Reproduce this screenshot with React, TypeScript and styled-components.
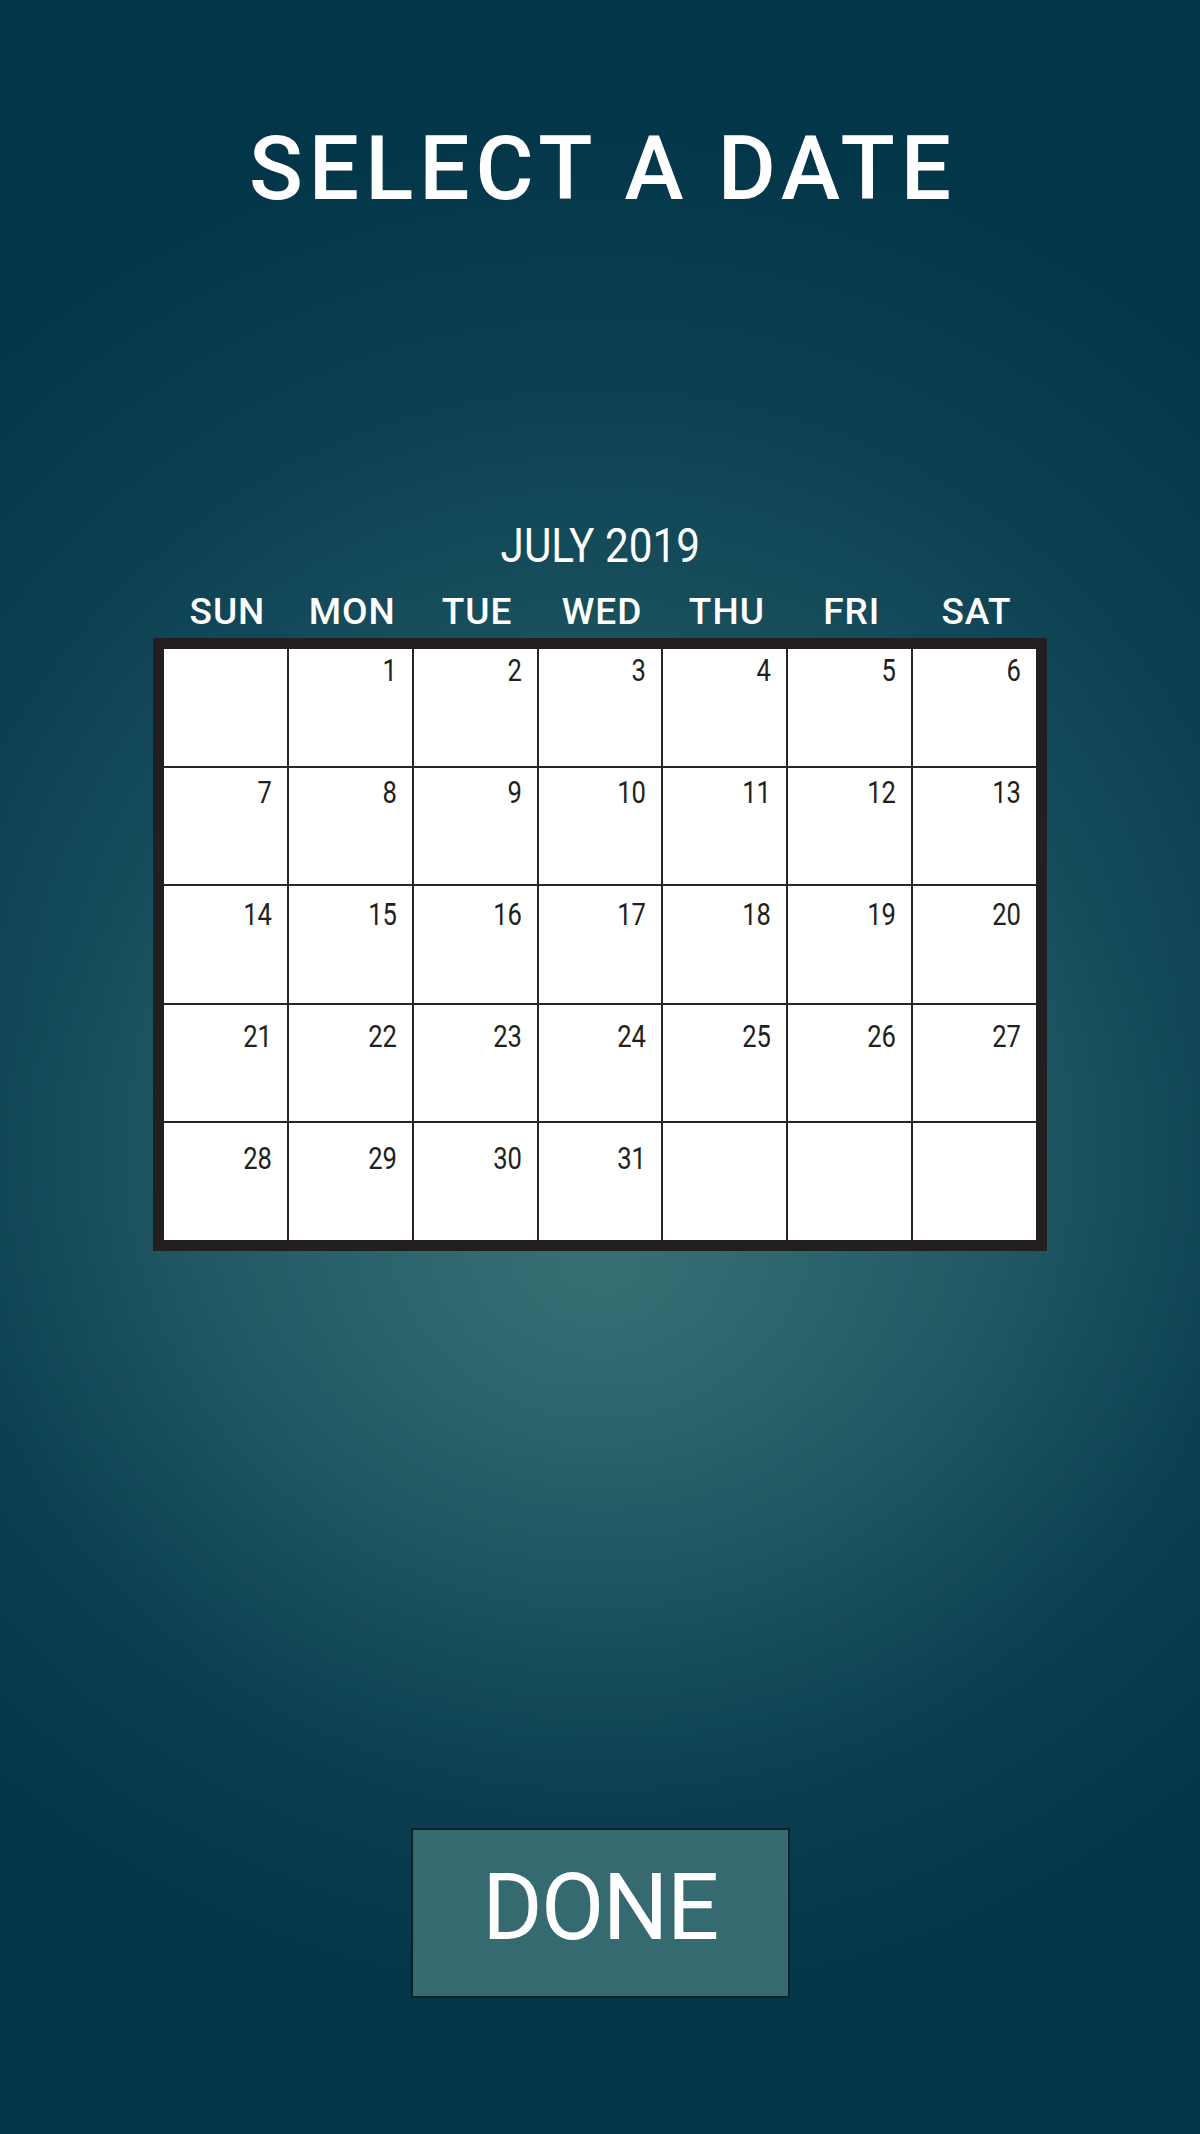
import styled, { createGlobalStyle } from "styled-components";

const GlobalStyle = createGlobalStyle`
  html, body {
    margin: 0;
    padding: 0;
  }
  body {
    font-family: Roboto, "Liberation Sans", sans-serif;
    background: #04374a;
  }
`;

const WEEKDAYS = ["SUN", "MON", "TUE", "WED", "THU", "FRI", "SAT"];

// july 2019 starts on a monday
function buildDays() {
  const cells: (number | null)[] = [null];
  for (let d = 1; d <= 31; d++) cells.push(d);
  while (cells.length < 35) cells.push(null);
  return cells;
}

function App() {
  const days = buildDays();

  return (
    <Page>
      <GlobalStyle />
      <Title>SELECT A DATE</Title>
      <CalendarSection>
        <MonthLabel>JULY 2019</MonthLabel>
        <WeekdayRow>
          {WEEKDAYS.map((w) => (
            <Weekday key={w}>{w}</Weekday>
          ))}
        </WeekdayRow>
        <Grid>
          {days.map((day, i) => (
            <DayCell key={i} $row={Math.floor(i / 7)}>
              {day !== null && <DayNumber>{day}</DayNumber>}
            </DayCell>
          ))}
        </Grid>
      </CalendarSection>
      <DoneButton type="button">DONE</DoneButton>
    </Page>
  );
}

export default App;

const Page = styled.div`
  width: 1200px;
  min-height: 2134px;
  box-sizing: border-box;
  display: flex;
  flex-direction: column;
  align-items: center;
  padding-top: 124px;
  background:
    radial-gradient(ellipse 640px 560px at 50% 59%, rgba(68, 126, 126, 0.6) 0%, rgba(68, 126, 126, 0.25) 45%, rgba(68, 126, 126, 0) 100%),
    radial-gradient(ellipse 950px 950px at 50% 50%, #266068 0%, #1c5461 40%, #0b4051 72%, #04364a 100%);
`;

const Title = styled.h1`
  margin: 0;
  font-family: Roboto, "Liberation Sans", sans-serif;
  font-weight: 500;
  font-size: 89px;
  line-height: 1;
  letter-spacing: 6px;
  padding-left: 6px;
  color: #ffffff;
`;

const CalendarSection = styled.div`
  margin-top: 309px;
  width: 894px;
  display: flex;
  flex-direction: column;
  align-items: center;
`;

const MonthLabel = styled.div`
  font-family: Roboto, "Liberation Sans", sans-serif;
  font-weight: 400;
  font-size: 48px;
  line-height: 1;
  color: #ffffff;
  transform: scaleX(0.88);
`;

const WeekdayRow = styled.div`
  margin-top: 23px;
  width: 100%;
  box-sizing: border-box;
  padding: 0 11px;
  display: grid;
  grid-template-columns: repeat(7, 1fr);
  column-gap: 2px;
`;

const Weekday = styled.div`
  text-align: center;
  font-family: Roboto, "Liberation Sans", sans-serif;
  font-weight: 500;
  font-size: 37px;
  line-height: 1;
  letter-spacing: 1px;
  padding-left: 4px;
  color: #ffffff;
`;

const Grid = styled.div`
  margin-top: 8px;
  width: 100%;
  box-sizing: border-box;
  border: 11px solid #231f20;
  background: #2a2627;
  display: grid;
  grid-template-columns: repeat(7, 1fr);
  grid-auto-rows: 116.6px;
  gap: 2px;
`;

// numbers sit a little lower in each following row
const DayCell = styled.div<{ $row: number }>`
  background: #ffffff;
  display: flex;
  justify-content: flex-end;
  align-items: flex-start;
  padding: ${(p) => 5 + p.$row * 3.4}px 15px 0 0;
`;

const DayNumber = styled.span`
  display: inline-block;
  font-family: Roboto, "Liberation Sans", sans-serif;
  font-weight: 400;
  font-size: 32px;
  line-height: 1;
  color: #231f20;
  transform: scaleX(0.8);
  transform-origin: right center;
`;

const DoneButton = styled.button`
  margin-top: 577px;
  width: 379px;
  height: 170px;
  box-sizing: border-box;
  border: 2px solid #0b1f26;
  border-radius: 2px;
  background: #346a70;
  color: #ffffff;
  font-family: Roboto, "Liberation Sans", sans-serif;
  font-weight: 400;
  font-size: 92px;
  line-height: 1;
  letter-spacing: -1.5px;
  padding: 0 0 10px 0;
  display: flex;
  align-items: center;
  justify-content: center;
  cursor: pointer;
`;
